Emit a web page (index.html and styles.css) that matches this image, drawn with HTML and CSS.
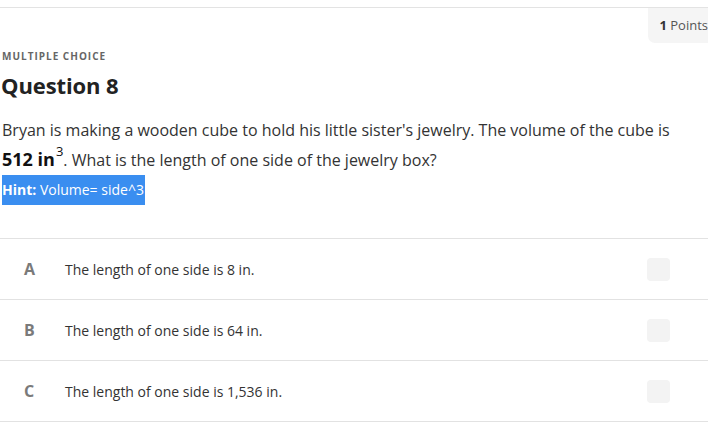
FILE: index.html
```html
<!DOCTYPE html>
<html lang="en">
<head>
<meta charset="utf-8">
<title>Question 8</title>
<link rel="stylesheet" href="styles.css">
</head>
<body>
<div class="page">
  <div class="topline"></div>
  <div class="points-row">
    <div class="points"><b>1</b> Points</div>
  </div>
  <div class="content">
    <div class="kicker">MULTIPLE CHOICE</div>
    <h2 class="title">Question 8</h2>
    <p class="stem">Bryan is making a wooden cube to hold his little sister's jewelry. The volume of the cube is <span class="math">512 in<sup>3</sup></span>. What is the length of one side of the jewelry box?</p>
    <div class="hint-line"><span class="hint"><b>Hint:</b> Volume= side^3</span></div>
  </div>
  <ul class="options">
    <li class="option"><span class="letter">A</span><span class="text">The length of one side is 8 in.</span><span class="check"></span></li>
    <li class="option"><span class="letter">B</span><span class="text">The length of one side is 64 in.</span><span class="check"></span></li>
    <li class="option"><span class="letter">C</span><span class="text">The length of one side is 1,536 in.</span><span class="check"></span></li>
  </ul>
</div>
</body>
</html>
```

FILE: styles.css
```css
html, body {
  margin: 0;
  padding: 0;
  background: #ffffff;
}
body {
  font-family: "Open Sans", "Liberation Sans", sans-serif;
  color: #333333;
}
.page {
  width: 708px;
  overflow: hidden;
}
.topline {
  height: 7px;
  border-bottom: 1px solid #e3e3e3;
}
.points-row {
  display: flex;
  justify-content: flex-end;
}
.points {
  height: 35px;
  line-height: 35px;
  padding: 0 12px 0 11px;
  margin-right: -12px;
  background: #f5f5f5;
  border-radius: 0 0 0 7px;
  font-size: 13px;
  color: #555;
  white-space: nowrap;
}
.points b {
  font-weight: 700;
  color: #333;
}
.content {
  padding-left: 2px;
}
.kicker {
  margin-top: 6px;
  font-size: 10px;
  line-height: 14px;
  font-weight: 700;
  letter-spacing: 1px;
  color: #666666;
}
.title {
  margin: 7px 0 0 -1px;
  font-size: 22px;
  line-height: 30px;
  font-weight: 700;
  color: #222222;
  letter-spacing: -0.1px;
}
.stem {
  margin: 16px 0 0;
  font-size: 16px;
  line-height: 29px;
  color: #333333;
}
.math {
  display: inline-block;
  white-space: nowrap;
  font-size: 18px;
  font-weight: 700;
  color: #111111;
  line-height: 29px;
}
.math sup {
  font-size: 13px;
  font-weight: 400;
  line-height: 0;
  vertical-align: 10px;
  margin-left: 1px;
}
.hint-line {
  margin-top: 0;
  line-height: 0;
}
.hint {
  display: inline-block;
  background: #3a8ef0;
  color: #ffffff;
  font-size: 14px;
  line-height: 30px;
  padding: 0 1px 0 0;
}
.hint b {
  font-weight: 700;
}
.options {
  list-style: none;
  margin: 33px 0 0;
  padding: 0;
}
.option {
  display: flex;
  align-items: center;
  height: 60px;
  border-top: 1px solid #e2e2e2;
}
.option:last-child {
  border-bottom: 1px solid #e2e2e2;
}
.letter {
  width: 41px;
  padding-left: 24px;
  font-size: 16px;
  font-weight: 700;
  color: #7a7a7a;
}
.text {
  flex: 1;
  font-size: 14px;
  color: #333333;
}
.check {
  width: 23px;
  height: 23px;
  margin-right: 38px;
  border-radius: 4px;
  background: #f3f3f3;
}
```
